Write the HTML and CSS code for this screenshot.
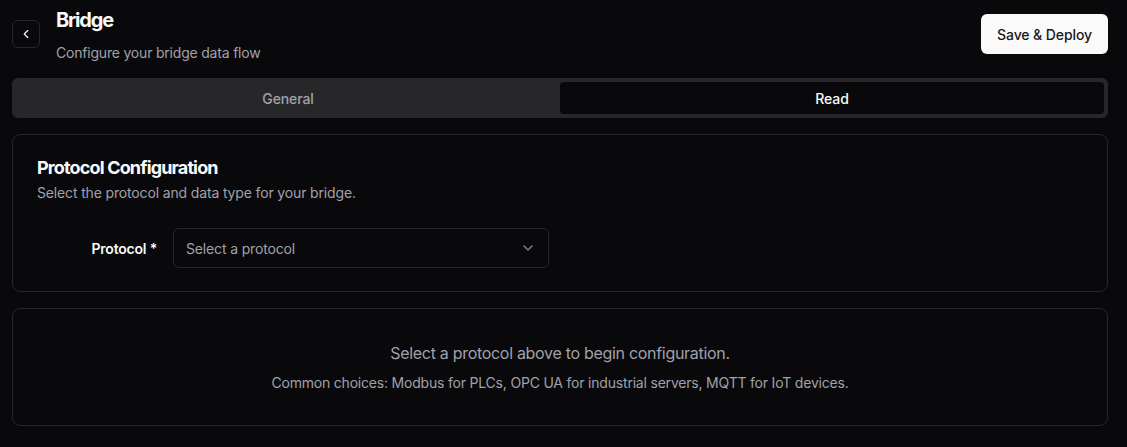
FILE: index.html
```html
<!DOCTYPE html>
<html lang="en">
<head>
<meta charset="utf-8">
<title>Bridge</title>
<link rel="stylesheet" href="styles.css">
</head>
<body>
<div class="page">
  <header class="header">
    <div class="header-left">
      <button class="back-btn" aria-label="Back">
        <svg width="16" height="16" viewBox="0 0 24 24" fill="none" stroke="currentColor" stroke-width="2" stroke-linecap="round" stroke-linejoin="round"><path d="m15 18-6-6 6-6"/></svg>
      </button>
      <div class="titles">
        <h1 class="title">Bridge</h1>
        <p class="subtitle">Configure your bridge data flow</p>
      </div>
    </div>
    <button class="primary-btn">Save &amp; Deploy</button>
  </header>

  <div class="tabs">
    <button class="tab">General</button>
    <button class="tab tab-active">Read</button>
  </div>

  <section class="card">
    <div class="card-header">
      <h2 class="card-title">Protocol Configuration</h2>
      <p class="card-desc">Select the protocol and data type for your bridge.</p>
    </div>
    <div class="card-content">
      <div class="field-row">
        <label class="field-label">Protocol *</label>
        <div class="select">
          <span class="select-placeholder">Select a protocol</span>
          <svg class="chevron" width="16" height="16" viewBox="0 0 24 24" fill="none" stroke="currentColor" stroke-width="2" stroke-linecap="round" stroke-linejoin="round"><path d="m6 9 6 6 6-6"/></svg>
        </div>
      </div>
    </div>
  </section>

  <section class="card card-empty">
    <p class="empty-main">Select a protocol above to begin configuration.</p>
    <p class="empty-sub">Common choices: Modbus for PLCs, OPC UA for industrial servers, MQTT for IoT devices.</p>
  </section>
</div>
</body>
</html>
```

FILE: styles.css
```css
* { box-sizing: border-box; }
html, body {
  margin: 0;
  padding: 0;
  background: #09090b;
  color: #fafafa;
  font-family: Inter, "Noto Sans", "Liberation Sans", sans-serif;
}
button { font-family: inherit; }
p, h1, h2 { margin: 0; }

.page {
  width: 1096px;
  margin-left: 12px;
  padding-top: 8px;
}

.header {
  display: flex;
  align-items: flex-start;
  justify-content: space-between;
  margin-bottom: 15px;
}
.header-left {
  display: flex;
  align-items: flex-start;
  gap: 16px;
}
.back-btn {
  margin-top: 12px;
  width: 28px;
  height: 28px;
  border: 1px solid #27272a;
  border-radius: 6px;
  background: #09090b;
  color: #fafafa;
  display: flex;
  align-items: center;
  justify-content: center;
  padding: 0;
}
.back-btn svg { width: 14px; height: 14px; }
.titles { display: flex; flex-direction: column; }
.title {
  font-size: 20px;
  line-height: 24px;
  font-weight: 700;
  letter-spacing: -1.2px;
}
.subtitle {
  margin-top: 11px;
  font-size: 14px;
  line-height: 20px;
  color: #a1a1aa;
  letter-spacing: -0.2px;
}
.primary-btn {
  margin-top: 6px;
  height: 40px;
  width: 127px;
  padding: 0;
  border: none;
  border-radius: 6px;
  background: #fafafa;
  color: #18181b;
  font-size: 14px;
  font-weight: 500;
  letter-spacing: -0.1px;
}

.tabs {
  display: grid;
  grid-template-columns: 1fr 1fr;
  height: 40px;
  padding: 4px;
  background: #27272a;
  border-radius: 6px;
  margin-bottom: 16px;
}
.tab {
  border: none;
  background: transparent;
  color: #a1a1aa;
  font-size: 14px;
  font-weight: 500;
  border-radius: 4px;
  letter-spacing: -0.1px;
}
.tab-active {
  background: #09090b;
  color: #fafafa;
}

.card {
  border: 1px solid #27272a;
  border-radius: 8px;
  background: #09090b;
  margin-bottom: 16px;
}
.card-header {
  padding: 24px 24px 0;
}
.card-title {
  font-size: 18px;
  line-height: 18px;
  font-weight: 700;
  letter-spacing: -0.85px;
}
.card-desc {
  margin-top: 6px;
  font-size: 14px;
  line-height: 20px;
  color: #a1a1aa;
  letter-spacing: -0.15px;
}
.card-content {
  padding: 25px 24px 23px;
}
.field-row {
  display: grid;
  grid-template-columns: 120px 376px;
  column-gap: 16px;
  align-items: center;
}
.field-label {
  text-align: right;
  font-size: 14px;
  font-weight: 600;
  color: #fafafa;
  letter-spacing: -0.2px;
}
.select {
  height: 40px;
  border: 1px solid #27272a;
  border-radius: 6px;
  padding: 0 12px;
  display: flex;
  align-items: center;
  justify-content: space-between;
}
.select-placeholder {
  font-size: 14px;
  color: #a1a1aa;
  letter-spacing: -0.15px;
}
.chevron { color: #fafafa; opacity: 0.5; }

.card-empty {
  padding: 32px 24px;
  text-align: center;
}
.empty-main {
  font-size: 16px;
  line-height: 24px;
  color: #a1a1aa;
  letter-spacing: -0.3px;
}
.empty-sub {
  margin-top: 8px;
  font-size: 14px;
  line-height: 20px;
  color: #a1a1aa;
  letter-spacing: -0.2px;
}
```
